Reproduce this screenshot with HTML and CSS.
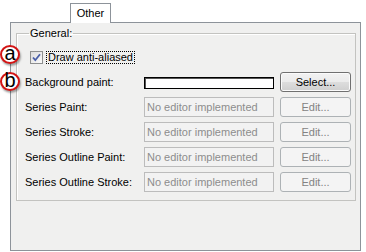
FILE: index.html
```html
<!DOCTYPE html>
<html>
<head>
<meta charset="utf-8">
<link rel="stylesheet" href="styles.css">
</head>
<body>
<div class="tabs"><div class="tab">Other</div></div>
<div class="panel">
  <fieldset class="group">
    <legend class="legend">General:</legend>
    <div class="grid">
      <div class="check-row">
        <span class="checkbox"><svg width="11" height="11" viewBox="0 0 11 11"><path d="M2 5.5 L4.3 8.2 L9 2.2" fill="none" stroke="#4a5fa8" stroke-width="1.8"/></svg></span>
        <span class="check-label">Draw anti-aliased</span>
      </div>
      <div class="label">Background paint:</div>
      <div class="paint-box"></div>
      <div class="btn">Select...</div>
      <div class="label">Series Paint:</div>
      <div class="field">No editor implemented</div>
      <div class="btn disabled">Edit...</div>
      <div class="label">Series Stroke:</div>
      <div class="field">No editor implemented</div>
      <div class="btn disabled">Edit...</div>
      <div class="label">Series Outline Paint:</div>
      <div class="field">No editor implemented</div>
      <div class="btn disabled">Edit...</div>
      <div class="label">Series Outline Stroke:</div>
      <div class="field">No editor implemented</div>
      <div class="btn disabled">Edit...</div>
    </div>
  </fieldset>
</div>
<div class="badge badge-a">a</div>
<div class="badge badge-b">b</div>
</body>
</html>
```

FILE: styles.css
```css
html, body {
  margin: 0;
  padding: 0;
  background: #ffffff;
  font-family: "Liberation Sans", Arial, sans-serif;
  font-size: 11px;
  color: #000;
}
.tabs {
  height: 22px;
  padding-left: 70px;
  box-sizing: border-box;
  display: flex;
  align-items: flex-end;
}
.tab {
  position: relative;
  z-index: 1;
  width: 41px;
  height: 20px;
  margin-bottom: -1px;
  box-sizing: border-box;
  border: 1px solid #8d939a;
  border-bottom: none;
  background: #ffffff;
  display: flex;
  align-items: center;
  justify-content: center;
  padding-bottom: 1px;
}
.panel {
  margin-left: 10px;
  width: 351px;
  height: 229px;
  box-sizing: border-box;
  border: 1px solid #8d939a;
  background: #f0f0ef;
  padding: 4px 4px 0 5px;
}
.group {
  margin: 0;
  border: 1px solid #c3c3c0;
  box-shadow: inset 1px 1px 0 #ffffff;
  padding: 7px 4px 8px 8px;
  width: 340px;
  box-sizing: border-box;
}
.legend {
  padding: 0 1px;
  margin-left: 4px;
  line-height: 13px;
  height: 13px;
}
.grid {
  display: grid;
  grid-template-columns: 119px 130px 71px;
  column-gap: 0;
  grid-auto-rows: 20px;
  row-gap: 5px;
}
.grid > .field, .grid > .paint-box { grid-column: 2; }
.grid > .btn { margin-left: 6px; }
.check-row {
  grid-column: 1 / 4;
  display: flex;
  align-items: center;
}
.checkbox {
  width: 13px;
  height: 13px;
  box-sizing: border-box;
  margin-left: 5px;
  border: 1px solid #8e8f8f;
  background: linear-gradient(135deg, #dcdcdc, #fbfbfb);
  display: flex;
  align-items: center;
  justify-content: center;
}
.check-label {
  margin-left: 3px;
  padding: 0 1px;
  line-height: 11px;
  border: 1px dotted #000;
}
.label {
  display: flex;
  align-items: center;
}
.paint-box {
  align-self: center;
  height: 12px;
  box-sizing: border-box;
  border: 1px solid #000;
  box-shadow: inset 1px 1px 0 #555;
  background: #fff;
  margin-top: 1px;
}
.field {
  box-sizing: border-box;
  border: 1px solid #bcbcbc;
  background: #f2f2f2;
  color: #8d8d8d;
  display: flex;
  align-items: center;
  padding-left: 2px;
  white-space: nowrap;
  overflow: hidden;
}
.btn {
  width: 71px;
  box-sizing: border-box;
  border: 1px solid #707070;
  border-radius: 3px;
  background: linear-gradient(#f2f2f2 0%, #ebebeb 50%, #dddddd 51%, #cfcfcf 100%);
  display: flex;
  align-items: center;
  justify-content: center;
  box-shadow: inset 0 0 0 1px #fbfbfb;
}
.btn.disabled {
  border-color: #adb2b5;
  background: #f4f4f4;
  color: #838383;
  box-shadow: none;
}
.badge {
  position: absolute;
  left: 0;
  width: 20px;
  height: 19px;
  box-sizing: border-box;
  border: 2px solid #d41414;
  border-radius: 50%;
  background: #fff;
  box-shadow: 1px 2px 2px rgba(0,0,0,0.35);
  display: flex;
  align-items: center;
  justify-content: center;
  font-size: 20px;
  line-height: 15px;
  padding-bottom: 3px;
  color: #000;
}
.badge-a { top: 45px; }
.badge-b { top: 72px; }
```
